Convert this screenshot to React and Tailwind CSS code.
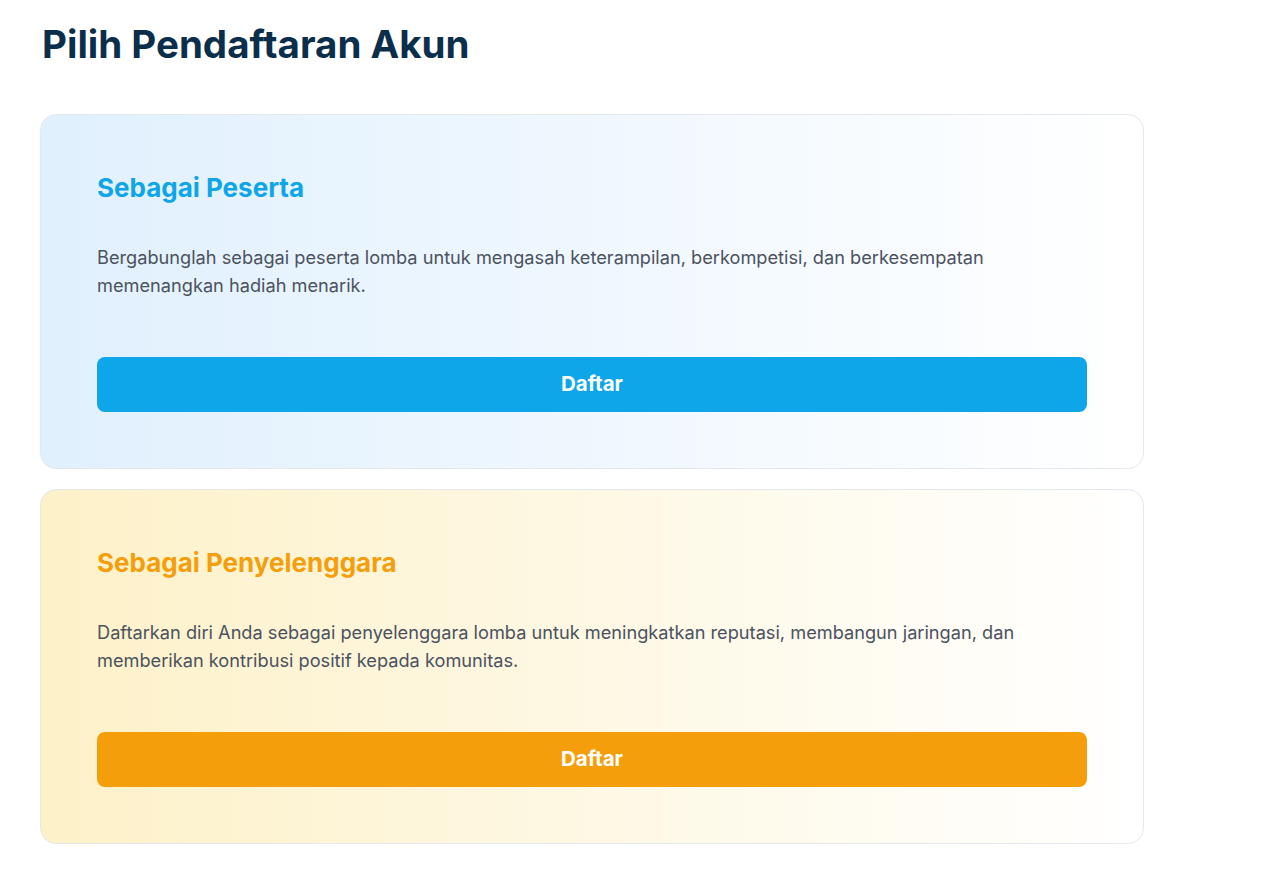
export default function App() {
  return (
    <div
      className="min-h-screen bg-white px-10 pt-5 pb-10"
      style={{ fontFamily: "Inter, 'Liberation Sans', sans-serif" }}
    >
      <h1 className="ml-0.5 text-[38.5px] leading-[48px] font-bold text-[#0b2f4b]">
        Pilih Pendaftaran Akun
      </h1>

      <div className="mt-[46px] w-[1104px] flex flex-col gap-5">
        <div className="rounded-2xl border border-[#e4e7ec] bg-gradient-to-r from-[#e0f0fd] to-white p-14">
          <h2 className="text-[26px] leading-[34px] font-bold text-[#0ea5e9]">
            Sebagai Peserta
          </h2>
          <p className="mt-[38px] max-w-[945px] text-[18.2px] leading-7 text-[#4b5260]">
            Bergabunglah sebagai peserta lomba untuk mengasah keterampilan, berkompetisi, dan berkesempatan
            memenangkan hadiah menarik.
          </p>
          <button className="mt-[58px] w-full h-[55px] rounded-lg bg-[#0ea5e9] text-white text-[20.5px] font-bold">
            Daftar
          </button>
        </div>

        <div className="rounded-2xl border border-[#e4e7ec] bg-gradient-to-r from-[#fdf1c8] to-white p-14">
          <h2 className="text-[26px] leading-[34px] font-bold text-[#f59e0b]">
            Sebagai Penyelenggara
          </h2>
          <p className="mt-[38px] max-w-[945px] text-[18.2px] leading-7 text-[#4b5260]">
            Daftarkan diri Anda sebagai penyelenggara lomba untuk meningkatkan reputasi, membangun jaringan, dan
            memberikan kontribusi positif kepada komunitas.
          </p>
          <button className="mt-[58px] w-full h-[55px] rounded-lg bg-[#f59e0b] text-white text-[20.5px] font-bold">
            Daftar
          </button>
        </div>
      </div>
    </div>
  );
}
